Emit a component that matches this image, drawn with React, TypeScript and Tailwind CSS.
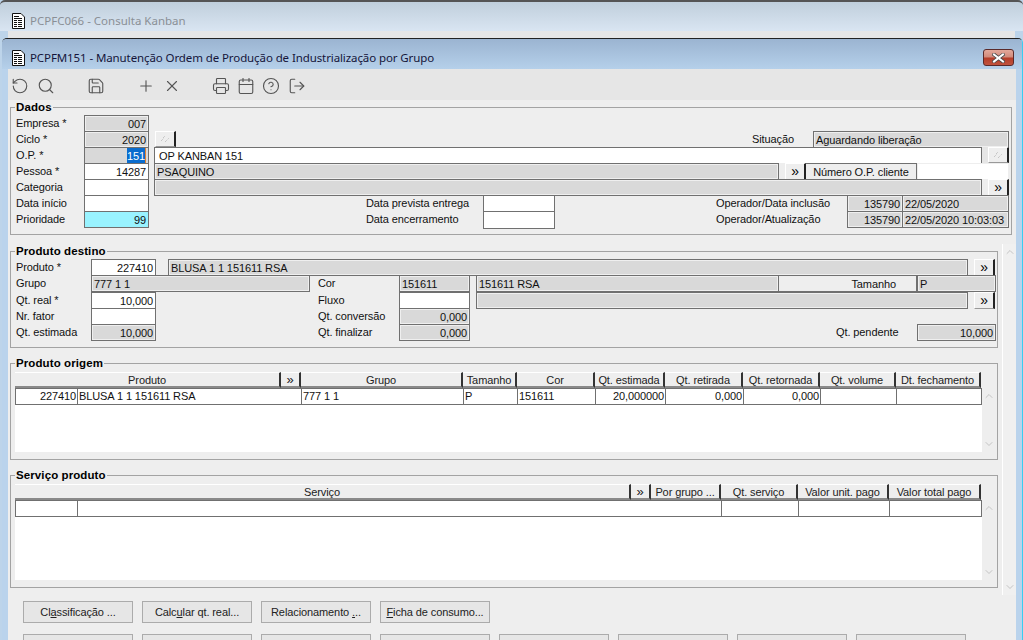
import React from "react";
import { RotateCcw, Search, Save, Plus, X, Printer, Calendar, CircleHelp, LogOut, ChevronUp, ChevronDown } from "lucide-react";

const DocIcon = () => (
  <svg width="13" height="16" viewBox="0 0 13 16" className="shrink-0">
    <path d="M.5 .5h8.5l3.5 3.5v11.500h-12z" fill="#fff" stroke="#111" />
    <path d="M2 3.500h5M2 5.500h8M2 7.500h3M6 7.500h4M2 9.500h3M6 9.500h4M2 11.500h3M6 11.500h4M2 13.500h3M6 13.500h4" stroke="#111" strokeWidth="1" />
  </svg>
);

const Slashes = () => (
  <svg width="10" height="8" viewBox="0 0 10 8">
    <path d="M1 6l3-3M5 7l4-4M3 3l2-2" stroke="#b5b5b5" strokeWidth="1" strokeDasharray="1 1" fill="none" />
  </svg>
);

const Label = ({ className = "", children }: { className?: string; children: React.ReactNode }) => (
  <div className={`shrink-0 h-[16px] leading-[16px] whitespace-nowrap text-[#111] ${className}`}>{children}</div>
);

const Box = ({ className = "", right, children }: { className?: string; right?: boolean; children?: React.ReactNode }) => (
  <div
    className={`shrink-0 h-[17px] border border-[#707070] leading-[17px] whitespace-nowrap overflow-hidden px-[2px] text-[#111] ${right ? "text-right" : ""} ${className}`}
  >
    {children}
  </div>
);

const gray = "bg-[#d9d9d9] shadow-[inset_0_0_0_1px_#efefef]";

const Btn = ({ className = "", children }: { className?: string; children?: React.ReactNode }) => (
  <div className={`shrink-0 h-[17px] bg-[#eeeeee] flex items-center justify-end ${className}`}>
    <div className="w-[21px] h-[17px] flex items-center justify-center pb-[2px] bg-[#eeeeee] border-t border-l border-t-white border-l-white border-r-2 border-b border-r-[#222] border-b-[#999] text-[14px] leading-none">
      {children}
    </div>
  </div>
);

const Row = ({ className = "h-[16px]", children }: { className?: string; children: React.ReactNode }) => (
  <div className={`flex items-start ${className}`}>{children}</div>
);

const Group = ({ title, className = "", legendClass = "-ml-[1px]", children }: { title: string; className?: string; legendClass?: string; children: React.ReactNode }) => (
  <fieldset className={`border border-[#a3a3a3] min-w-0 ${className}`}>
    <legend className={`px-[1px] h-[13px] leading-[13px] font-bold text-[11.5px] tracking-[0.1px] text-black ${legendClass}`}>{title}</legend>
    {children}
  </fieldset>
);

const Head = ({ className = "", children }: { className?: string; children?: React.ReactNode }) => (
  <div className={`shrink-0 h-[16px] bg-[#eeeeee] border-t border-t-white border-b-2 border-b-[#8a8a8a] border-r-2 border-r-[#333] text-center leading-[14px] whitespace-nowrap overflow-hidden text-[#222] ${className}`}>
    {children}
  </div>
);

const Cell = ({ className = "", children }: { className?: string; children?: React.ReactNode }) => (
  <div className={`shrink-0 h-[15px] border-r border-[#707070] px-[1px] leading-[15px] whitespace-nowrap overflow-hidden text-[#111] ${className}`}>
    {children}
  </div>
);

const Scroll = ({ className = "" }: { className?: string }) => (
  <div className={`w-[14px] flex flex-col justify-between items-center ${className}`}>
    <ChevronUp size={12} strokeWidth={2} className="text-[#c4c4c4]" />
    <ChevronDown size={12} strokeWidth={2} className="text-[#c4c4c4]" />
  </div>
);

const PageButton = ({ children }: { children?: React.ReactNode }) => (
  <div className="w-[110px] h-[22px] shrink-0 bg-[#e6e6e6] border border-[#ababab] flex items-center justify-center text-[#222] whitespace-nowrap">
    {children}
  </div>
);

export default function App() {
  return (
    <div className="w-[1023px] h-[640px] overflow-hidden bg-[#bdd4ea] text-[11px] tracking-[-0.1px] font-['Liberation_Sans',Arial,sans-serif]">
      {/* background window */}
      <div className="h-[31px] border-t-2 border-[#555] rounded-t-[5px] bg-gradient-to-b from-[#c0cfdc] to-[#d9e5f2] flex items-center pt-[8px] pl-[12px] gap-[5px] font-['Noto_Sans',sans-serif] text-[11.5px] tracking-[0px] text-[#8a8f96]">
        <DocIcon />
        <span>PCPFC066 - Consulta Kanban</span>
      </div>
      <div className="h-[7px] mx-[8px] bg-[#e6e6e6]" />
      {/* foreground window */}
      <div className="ml-[2px] h-[602px] border-t border-t-[#222] border-r border-r-[#38cdf0] rounded-t-[5px] bg-[#bad3ec] flex flex-col overflow-hidden">
        <div className="h-[30px] shrink-0 bg-gradient-to-b from-[#9bb4d1] to-[#b5d0ea] flex items-center pt-[8px] pl-[10px] pr-[8px] gap-[5px] font-['Noto_Sans',sans-serif] text-[11.5px] tracking-[-0.1px] text-[#15153a]">
          <DocIcon />
          <span>PCPFM151 - Manutenção Ordem de Produção de Industrialização por Grupo</span>
          <div className="ml-auto w-[31px] h-[17px] mt-[-1px] rounded-[3px] border border-[#5a2a2a] bg-[linear-gradient(180deg,#e3a89a_0%,#d08a7b_48%,#b43c28_52%,#c0533e_100%)] flex items-center justify-center">
            <svg width="13" height="10" viewBox="0 0 13 10">
              <path d="M2 1.500l9 7M11 1.500l-9 7" stroke="#4a4a4a" strokeWidth="3.500" strokeLinecap="square" />
              <path d="M2 1.500l9 7M11 1.500l-9 7" stroke="#fff" strokeWidth="2" strokeLinecap="square" />
            </svg>
          </div>
        </div>
        <div className="ml-[6px] mr-[6px] flex-1 bg-[#eeeeee] flex flex-col min-h-0">
          {/* toolbar */}
          <div className="h-[31px] shrink-0 bg-[#e6e6e6] flex items-center pt-[2px] pl-[3px] text-[#555]">
            <RotateCcw size={18} strokeWidth={1.5} />
            <Search size={18} strokeWidth={1.5} className="ml-[8px]" />
            <Save size={18} strokeWidth={1.5} className="ml-[32px]" />
            <Plus size={18} strokeWidth={1.5} className="ml-[32px]" />
            <X size={18} strokeWidth={1.5} className="ml-[8px]" />
            <Printer size={18} strokeWidth={1.5} className="ml-[31px]" />
            <Calendar size={18} strokeWidth={1.5} className="ml-[7px]" />
            <CircleHelp size={18} strokeWidth={1.5} className="ml-[7px]" />
            <LogOut size={18} strokeWidth={1.5} className="ml-[8px]" />
          </div>

          {/* Dados */}
          <Group title="Dados" className="mt-[1px] ml-[2px] w-[1002px] shrink-0 pt-[1px] pb-[7px] pl-[5px]">
            <Row>
              <Label className="w-[68px]">Empresa *</Label>
              <Box right className={`w-[65px] ${gray}`}>007</Box>
            </Row>
            <Row>
              <Label className="w-[68px]">Ciclo *</Label>
              <Box right className={`w-[65px] ${gray}`}>2020</Box>
              <div className="ml-[6px] w-[21px] h-[16px] bg-[#eeeeee] border-t border-l border-t-white border-l-white border-r-2 border-b border-r-[#222] border-b-[#999] flex items-center justify-center">
                <Slashes />
              </div>
              <Label className="ml-[576px] w-[61px]">Situação</Label>
              <Box className={`w-[196px] ${gray}`}>Aguardando liberação</Box>
            </Row>
            <Row>
              <Label className="w-[68px]">O.P. *</Label>
              <Box right className="w-[65px] bg-[#d9d9d9] border-[#3d8fd6]">
                <span className="bg-[#0a6cce] text-white inline-block border-r border-[#e08030]">151</span>
              </Box>
              <Box className="ml-[5px] w-[828px] bg-white pl-[4px]">OP KANBAN 151</Box>
              <div className="shrink-0 w-[27px] h-[17px] bg-[#e6e6e6] flex justify-end">
                <div className="w-[21px] h-[16px] bg-[#eeeeee] border-t border-l border-t-white border-l-white border-r-2 border-b border-r-[#222] border-b-[#999] flex items-center justify-center">
                  <Slashes />
                </div>
              </div>
            </Row>
            <Row>
              <Label className="w-[68px]">Pessoa *</Label>
              <Box right className="w-[65px] bg-white">14287</Box>
              <Box className={`ml-[5px] w-[625px] ${gray}`}>PSAQUINO</Box>
              <Btn className="w-[27px]">»</Btn>
              <Box className="w-[111px] bg-[#eeeeee] text-center border-l-0">Número O.P. cliente</Box>
              <Box className="w-[92px] bg-white border-[#eeeeee]" />
            </Row>
            <Row>
              <Label className="w-[68px]">Categoria</Label>
              <Box className="w-[65px] bg-white" />
              <Box className={`ml-[5px] w-[828px] ${gray}`} />
              <Btn className="w-[27px]">»</Btn>
            </Row>
            <Row>
              <Label className="w-[68px]">Data início</Label>
              <Box className="w-[65px] bg-white" />
              <Label className="ml-[217px] w-[117px]">Data prevista entrega</Label>
              <Box className="w-[72px] bg-white" />
              <Label className="ml-[161px] w-[131px]">Operador/Data inclusão</Label>
              <Box right className={`w-[56px] ${gray}`}>135790</Box>
              <Box className={`w-[106px] border-l-0 ${gray}`}>22/05/2020</Box>
            </Row>
            <Row>
              <Label className="w-[68px]">Prioridade</Label>
              <Box right className="w-[65px] bg-[#99f3ff]">99</Box>
              <Label className="ml-[217px] w-[117px]">Data encerramento</Label>
              <Box className="w-[72px] h-[18px] bg-white" />
              <Label className="ml-[161px] w-[131px]">Operador/Atualização</Label>
              <Box right className={`w-[56px] ${gray}`}>135790</Box>
              <Box className={`w-[106px] border-l-0 ${gray}`}>22/05/2020 10:03:03</Box>
            </Row>
          </Group>

          <div className="flex items-start flex-1 min-h-0">
            <div className="w-[994px] shrink-0 pl-[2px]">
              {/* Produto destino */}
              <Group title="Produto destino" className="mt-[10px] w-[988px] pt-[1px] pb-[6px] pl-[5px]">
                <Row>
                  <Label className="w-[75px]">Produto *</Label>
                  <Box right className="w-[65px] bg-white">227410</Box>
                  <Box className={`ml-[12px] w-[800px] ${gray}`}>BLUSA 1 1 151611 RSA</Box>
                  <Btn className="w-[27px]">»</Btn>
                </Row>
                <Row className="h-[17px]">
                  <Label className="w-[75px]">Grupo</Label>
                  <Box className={`w-[219px] ${gray}`}>777 1 1</Box>
                  <Label className="ml-[8px] w-[81px]">Cor</Label>
                  <Box className={`w-[71px] ${gray}`}>151611</Box>
                  <Box className={`ml-[6px] w-[303px] ${gray}`}>151611 RSA</Box>
                  <Box className="w-[138px] bg-[#eeeeee] text-right pr-[20px] border-l-0">Tamanho</Box>
                  <Box className={`w-[79px] border-l-[#707070] ${gray}`}>P</Box>
                </Row>
                <Row>
                  <Label className="w-[75px]">Qt. real *</Label>
                  <Box right className="w-[65px] bg-white">10,000</Box>
                  <Label className="ml-[162px] w-[81px]">Fluxo</Label>
                  <Box className="w-[71px] bg-white" />
                  <Box className={`ml-[6px] w-[492px] ${gray}`} />
                  <Btn className="w-[27px]">»</Btn>
                </Row>
                <Row>
                  <Label className="w-[75px]">Nr. fator</Label>
                  <Box className="w-[65px] bg-white" />
                  <Label className="ml-[162px] w-[81px]">Qt. conversão</Label>
                  <Box right className={`w-[71px] ${gray}`}>0,000</Box>
                </Row>
                <Row className="h-[17px]">
                  <Label className="w-[75px]">Qt. estimada</Label>
                  <Box right className={`w-[65px] ${gray}`}>10,000</Box>
                  <Label className="ml-[162px] w-[81px]">Qt. finalizar</Label>
                  <Box right className={`w-[71px] ${gray}`}>0,000</Box>
                  <Label className="ml-[366px] w-[81px]">Qt. pendente</Label>
                  <Box right className={`w-[79px] ${gray}`}>10,000</Box>
                </Row>
              </Group>

              {/* Produto origem */}
              <Group title="Produto origem" legendClass="ml-0" className="mt-[9px] w-[988px] pt-[2px] pb-[7px] pl-[4px]">
                <div className="flex">
                  <Head className="w-[266px]">Produto</Head>
                  <Head className="w-[20px] text-[13px]">»</Head>
                  <Head className="w-[162px]">Grupo</Head>
                  <Head className="w-[54px]">Tamanho</Head>
                  <Head className="w-[78px]">Cor</Head>
                  <Head className="w-[70px]">Qt. estimada</Head>
                  <Head className="w-[78px]">Qt. retirada</Head>
                  <Head className="w-[77px]">Qt. retornada</Head>
                  <Head className="w-[76px]">Qt. volume</Head>
                  <Head className="w-[85px]">Dt. fechamento</Head>
                </div>
                <div className="flex">
                  <div className="w-[967px] h-[64px] bg-white">
                    <div className="flex border-y border-l border-[#707070] h-[17px]">
                      <Cell className="w-[62px] text-right">227410</Cell>
                      <Cell className="w-[224px]">BLUSA 1 1 151611 RSA</Cell>
                      <Cell className="w-[162px]">777 1 1</Cell>
                      <Cell className="w-[54px]">P</Cell>
                      <Cell className="w-[78px]">151611</Cell>
                      <Cell className="w-[70px] text-right">20,000000</Cell>
                      <Cell className="w-[78px] text-right">0,000</Cell>
                      <Cell className="w-[77px] text-right">0,000</Cell>
                      <Cell className="w-[76px]" />
                      <Cell className="w-[85px]" />
                    </div>
                  </div>
                  <Scroll className="h-[64px] py-[2px]" />
                </div>
              </Group>

              {/* Serviço produto */}
              <Group title="Serviço produto" legendClass="ml-0" className="mt-[9px] w-[988px] pt-[2px] pb-[7px] pl-[4px]">
                <div className="flex">
                  <Head className="w-[616px]">Serviço</Head>
                  <Head className="w-[20px] text-[13px]">»</Head>
                  <Head className="w-[70px]">Por grupo ...</Head>
                  <Head className="w-[77px]">Qt. serviço</Head>
                  <Head className="w-[91px]">Valor unit. pago</Head>
                  <Head className="w-[92px]">Valor total pago</Head>
                </div>
                <div className="flex">
                  <div className="w-[967px] h-[80px] bg-white">
                    <div className="flex border-y border-l border-[#707070] h-[17px]">
                      <Cell className="w-[62px]" />
                      <Cell className="w-[644px]" />
                      <Cell className="w-[77px]" />
                      <Cell className="w-[91px]" />
                      <Cell className="w-[92px]" />
                    </div>
                  </div>
                  <Scroll className="h-[80px] py-[2px]" />
                </div>
              </Group>

              {/* Buttons */}
              <div className="flex flex-col gap-[11px] mt-[13px] pl-[13px]">
                <div className="flex gap-[9px]">
                  <PageButton>Cl<u>a</u>ssificação ...</PageButton>
                  <PageButton>Calc<u>u</u>lar qt. real...</PageButton>
                  <PageButton>Relacionamento&nbsp;<u>.</u>..</PageButton>
                  <PageButton><u>F</u>icha de consumo...</PageButton>
                </div>
                <div className="flex gap-[9px]">
                  <PageButton /><PageButton /><PageButton /><PageButton />
                  <PageButton /><PageButton /><PageButton /><PageButton />
                </div>
              </div>
            </div>
            {/* outer scrollbar */}
            <Scroll className="h-[351px] mt-[9px] bg-[#f0f0f0] border-l border-white py-[2px]" />
          </div>
        </div>
      </div>
    </div>
  );
}
